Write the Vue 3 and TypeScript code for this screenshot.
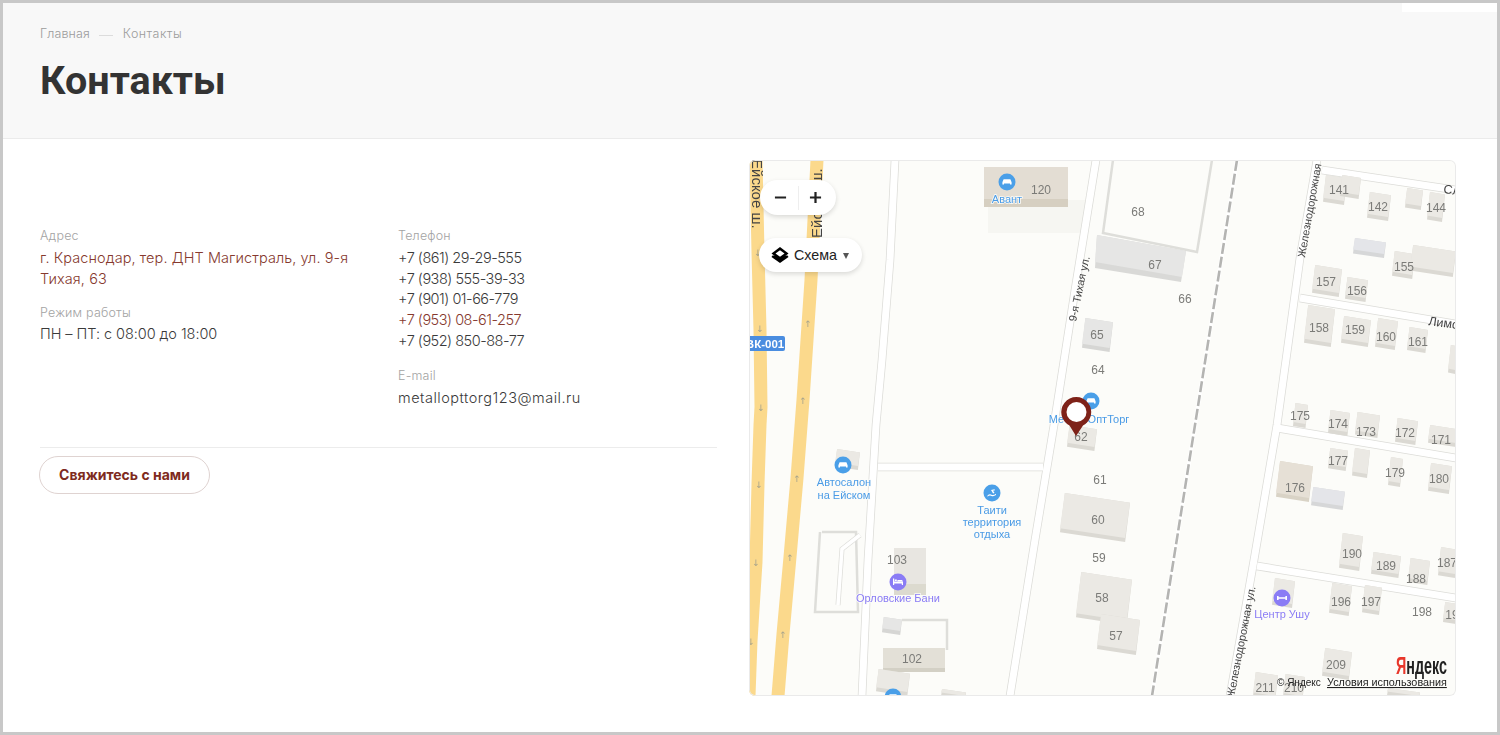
<script setup lang="ts">
interface Building { box: [number, number, number, number]; kind?: string }
interface Label { x: number; y: number; t: string }
interface Poi { x: number; y: number; color: string; glyph: string }

const phones = [
  { n: '+7 (861) 29-29-555' },
  { n: '+7 (938) 555-39-33' },
  { n: '+7 (901) 01-66-779' },
  { n: '+7 (953) 08-61-257', accent: true },
  { n: '+7 (952) 850-88-77' },
]

const buildings: Building[] = [
  { box: [1082, 318, 1113, 352], kind: 'cool' },
  { box: [1067, 425, 1097, 451] },
  { box: [1060, 493, 1130, 542] },
  { box: [1076, 572, 1132, 625] },
  { box: [1097, 614, 1140, 655] },
  { box: [835, 449, 860, 470] },
  { box: [882, 617, 902, 635], kind: 'cool' },
  { box: [876, 669, 910, 696] },
  { box: [941, 689, 966, 700] },
  { box: [1323, 175, 1347, 205] },
  { box: [1340, 175, 1361, 199] },
  { box: [1367, 192, 1391, 221] },
  { box: [1405, 188, 1423, 210] },
  { box: [1427, 192, 1445, 222] },
  { box: [1353, 238, 1386, 258], kind: 'blue' },
  { box: [1392, 251, 1415, 279] },
  { box: [1410, 245, 1456, 277] },
  { box: [1312, 265, 1342, 297] },
  { box: [1345, 277, 1368, 302] },
  { box: [1304, 305, 1335, 347] },
  { box: [1341, 316, 1371, 347] },
  { box: [1375, 318, 1398, 350] },
  { box: [1407, 327, 1428, 353] },
  { box: [1448, 345, 1458, 374] },
  { box: [1293, 403, 1308, 428] },
  { box: [1328, 410, 1350, 436] },
  { box: [1355, 412, 1380, 438] },
  { box: [1395, 418, 1418, 445] },
  { box: [1428, 425, 1458, 447] },
  { box: [1328, 448, 1348, 471] },
  { box: [1352, 448, 1370, 478] },
  { box: [1388, 457, 1403, 487] },
  { box: [1428, 463, 1452, 494] },
  { box: [1276, 461, 1313, 502], kind: 'tan' },
  { box: [1311, 487, 1345, 510], kind: 'blue' },
  { box: [1339, 533, 1363, 571] },
  { box: [1371, 552, 1401, 578] },
  { box: [1408, 558, 1430, 585] },
  { box: [1438, 547, 1458, 578] },
  { box: [1272, 578, 1295, 608] },
  { box: [1329, 583, 1352, 616] },
  { box: [1362, 585, 1382, 615] },
  { box: [1443, 602, 1458, 624] },
  { box: [1322, 648, 1352, 680] },
  { box: [1253, 672, 1278, 700] },
  { box: [1283, 674, 1305, 700] },
  { box: [1387, 688, 1420, 700] },
]

function top(b: Building): string {
  const [x1, y1, x2, y2] = b.box
  const d = (x2 - x1) * 0.14
  const s = (y2 - y1) * 0.1
  return `${x1 + s},${y1} ${x2},${y1 + d} ${x2 - s},${y2 - 4} ${x1},${y2 - d - 4}`
}
function base(b: Building): string {
  const [x1, y1, x2, y2] = b.box
  const d = (x2 - x1) * 0.14
  const s = (y2 - y1) * 0.1
  return `${x1 + s},${y1} ${x2},${y1 + d} ${x2 - s},${y2} ${x1},${y2 - d}`
}

const labels: Label[] = [
  { x: 1041, y: 194, t: '120' }, { x: 1138, y: 216, t: '68' }, { x: 1155, y: 269, t: '67' },
  { x: 1185, y: 303, t: '66' }, { x: 1097, y: 339, t: '65' }, { x: 1098, y: 374, t: '64' },
  { x: 1081, y: 441, t: '62' }, { x: 1100, y: 484, t: '61' }, { x: 1098, y: 524, t: '60' },
  { x: 1099, y: 562, t: '59' }, { x: 1102, y: 602, t: '58' }, { x: 1116, y: 640, t: '57' },
  { x: 897, y: 564, t: '103' }, { x: 912, y: 663, t: '102' }, { x: 1339, y: 194, t: '141' },
  { x: 1378, y: 211, t: '142' }, { x: 1436, y: 212, t: '144' }, { x: 1404, y: 271, t: '155' },
  { x: 1326, y: 286, t: '157' }, { x: 1357, y: 295, t: '156' }, { x: 1319, y: 332, t: '158' },
  { x: 1355, y: 334, t: '159' }, { x: 1386, y: 341, t: '160' }, { x: 1418, y: 346, t: '161' },
  { x: 1300, y: 420, t: '175' }, { x: 1338, y: 428, t: '174' }, { x: 1366, y: 436, t: '173' },
  { x: 1405, y: 437, t: '172' }, { x: 1441, y: 444, t: '171' }, { x: 1338, y: 465, t: '177' },
  { x: 1395, y: 477, t: '179' }, { x: 1439, y: 483, t: '180' }, { x: 1295, y: 492, t: '176' },
  { x: 1352, y: 558, t: '190' }, { x: 1386, y: 570, t: '189' }, { x: 1416, y: 583, t: '188' },
  { x: 1447, y: 567, t: '187' }, { x: 1341, y: 606, t: '196' }, { x: 1371, y: 606, t: '197' },
  { x: 1422, y: 616, t: '198' }, { x: 1452, y: 619, t: '19' }, { x: 1336, y: 669, t: '209' },
  { x: 1265, y: 692, t: '211' }, { x: 1294, y: 692, t: '210' },
]

const blueTexts: Label[] = [
  { x: 1007, y: 203, t: 'Авант' }, { x: 844, y: 486, t: 'Автосалон' }, { x: 844, y: 499, t: 'на Ейском' },
  { x: 992, y: 514, t: 'Таити' }, { x: 992, y: 526, t: 'территория' }, { x: 992, y: 538, t: 'отдыха' },
  { x: 1089, y: 423, t: 'МеталлОптТорг' },
]
const purpleTexts: Label[] = [
  { x: 898, y: 602, t: 'Орловские Бани' }, { x: 1282, y: 618, t: 'Центр Ушу' },
]

const carGlyph = 'M-4.6 2.6v-2.4l1.2-3h6.8l1.2 3v2.4h-1.6v-1h-6v1z'
const pois: Poi[] = [
  { x: 1007, y: 182, color: '#4a9fe8', glyph: carGlyph },
  { x: 843, y: 465, color: '#4a9fe8', glyph: carGlyph },
  { x: 893, y: 697, color: '#4a9fe8', glyph: carGlyph },
  { x: 1091, y: 401, color: '#4a9fe8', glyph: carGlyph },
  { x: 992, y: 493, color: '#4a9fe8', glyph: 'M-4.5 2.5q2-2 4-.8t4.5-1v1.4q-2.500 1.800-4.500 .8t-4 .8zM-1-3l3.500-.8.500 1-2 .6 1.500 2-1.400 .8z' },
  { x: 898, y: 582, color: '#8a7cf5', glyph: 'M-5-3.500h1.200v3h8.800v3.500h-1.200v-1.500h-7.600v1.500h-1.200zM-3.200-2.500h2v1.600h-2zM-.6-2h4.200q1 0 1 1v.2h-5.200z' },
  { x: 1282, y: 598, color: '#8a7cf5', glyph: 'M-5-2h1.600v1.300h6.800v-1.300h1.600v4h-1.600v-1.300h-6.800v1.300h-1.600z' },
]

const southArrows = [[758, 256], [760, 332], [761, 411], [759, 488], [756, 566], [751, 645]]
const northArrows = [[808, 327], [803, 404], [797, 482], [790, 561], [783, 638]]
</script>

<template>
  <div class="frame">
    <div class="corner-patch"></div>
    <header class="head">
      <nav class="crumbs">
        <span>Главная</span>
        <i class="crumb-sep"></i>
        <span class="crumb-current">Контакты</span>
      </nav>
      <h1 class="title">Контакты</h1>
    </header>

    <main class="body">
      <section class="info">
        <div class="columns">
          <div class="col">
            <div class="label">Адрес</div>
            <div class="value accent address">г. Краснодар, тер. ДНТ Магистраль, ул. 9-я Тихая, 63</div>
            <div class="label second">Режим работы</div>
            <div class="value hours">ПН – ПТ: с 08:00 до 18:00</div>
          </div>
          <div class="col">
            <div class="label">Телефон</div>
            <div v-for="p in phones" :key="p.n" class="value phone" :class="{ accent: p.accent }">{{ p.n }}</div>
            <div class="label third">E-mail</div>
            <div class="value email">metallopttorg123@mail.ru</div>
          </div>
        </div>
        <div class="rule"></div>
        <button class="cta" type="button">Свяжитесь с нами</button>
      </section>

      <section class="map">
        <svg class="map-svg" viewBox="749 160 707 536" width="707" height="536">
          <rect x="749" y="160" width="707" height="536" fill="#fcfcf9" />

          <!-- pale lot behind Avant -->
          <rect x="988" y="200" width="97" height="33" fill="#f6f6f2" />
          <rect x="984" y="167" width="84" height="40" fill="#e3ddd3" />
          <rect x="984" y="199" width="84" height="8" fill="#d6cfc1" />

          <!-- yellow highways -->
          <polyline class="yellow" points="756,160 758,252 760,330 761,407 760,425 758,484 756,562 751,641 749,696" />
          <polyline class="yellow" points="817,160 811,280 803,400 797,478 790,557 783,634 778,696" />

          <!-- thin lot outlines -->
          <g class="lot-line">
            <polyline points="822,532 856,532 858,612 815,612 820,532" />
            <polyline points="1113,160 1103,233 1197,252 1212,160" />
            <polyline points="902,620 947,620 947,650" />
          </g>

          <!-- white roads -->
          <g class="road-edge">
            <polyline points="895,160 890,260 882,360 876,425 868,560 862,696" />
            <polyline points="1096,160 1075,290 1054,425 1035,540 1010,696" />
            <polyline points="878,467 1043,467" />
            <polyline points="1317,160 1300,258 1277,425 1254,560 1230,696" />
            <polyline points="1322,170 1456,190" />
            <polyline points="1300,298 1456,324" />
            <polyline points="1277,428 1456,458" />
            <polyline points="1257,566 1456,598" />
          </g>
          <g class="road-fill">
            <polyline points="895,160 890,260 882,360 876,425 868,560 862,696" />
            <polyline points="1096,160 1075,290 1054,425 1035,540 1010,696" />
            <polyline points="878,467 1043,467" />
            <polyline points="1317,160 1300,258 1277,425 1254,560 1230,696" />
            <polyline points="1322,170 1456,190" />
            <polyline points="1300,298 1456,324" />
            <polyline points="1277,428 1456,458" />
            <polyline points="1257,566 1456,598" />
          </g>
          <polyline class="alley-edge" points="860,535 842,549 838,605" />
          <polyline class="alley-fill" points="860,535 842,549 838,605" />

          <!-- railway -->
          <polyline class="rail-base" points="1237,160 1195,425 1152,696" />
          <polyline class="rail-dash" points="1237,160 1195,425 1152,696" />

          <!-- large blocks -->
          <polygon points="1097,235 1186,251 1181,282 1095,268" fill="#d9d9d7" />
          <polygon points="1097,235 1186,251 1182,277 1095,262" fill="#e6e6e5" />
          <polygon points="894,548 926,548 926,595 894,595" fill="#e8e6e1" />
          <polygon points="894,584 926,584 926,595 894,595" fill="#dcdacf" />
          <polygon points="883,648 945,648 945,672 883,672" fill="#e3e0d7" />
          <polygon points="883,668 945,668 945,672 883,672" fill="#d3d0c5" />

          <g v-for="(b, i) in buildings" :key="i">
            <polygon :points="base(b)" :class="['shade', b.kind]" />
            <polygon :points="top(b)" :class="['roof', b.kind]" />
          </g>

          <!-- road arrows -->
          <text v-for="a in southArrows" :key="'s' + a[1]" :x="a[0]" :y="a[1]" class="arrow">↓</text>
          <text v-for="a in northArrows" :key="'n' + a[1]" :x="a[0]" :y="a[1]" class="arrow">↑</text>

          <!-- road signs -->
          <rect x="740" y="336" width="45" height="15" rx="2" fill="#4a8de0" />
          <text x="765" y="348" class="shield">ВК-001</text>

          <!-- street names -->
          <text class="street big" transform="translate(752 159) rotate(90)">Ейское ш.</text>
          <text class="street big" transform="translate(822 238) rotate(-90)">Ейское ш.</text>
          <text class="street" transform="translate(1076 322) rotate(-78)">9-я Тихая ул.</text>
          <text class="street" transform="translate(1305 258) rotate(-80)">Железнодорожная</text>
          <text class="street" transform="translate(1234 698) rotate(-79)">Железнодорожная ул.</text>
          <text class="street side" transform="translate(1443 193) rotate(8)">Сл</text>
          <text class="street side" transform="translate(1428 325) rotate(8)">Лимо</text>

          <!-- house numbers -->
          <text v-for="l in labels" :key="l.t" :x="l.x" :y="l.y" class="num">{{ l.t }}</text>

          <!-- POIs -->
          <g v-for="p in pois" :key="p.x" :transform="`translate(${p.x} ${p.y})`">
            <circle r="8.500" :fill="p.color" />
            <path :d="p.glyph" fill="#fff" />
          </g>
          <text v-for="l in blueTexts" :key="l.t" :x="l.x" :y="l.y" class="poi blue-t">{{ l.t }}</text>
          <text v-for="l in purpleTexts" :key="l.t" :x="l.x" :y="l.y" class="poi purple-t">{{ l.t }}</text>

          <!-- placemark -->
          <path d="M1076 436 L1069.500 425.500 A15 15 0 1 1 1083 425.500 Z" fill="#7e2219" />
          <circle cx="1076.500" cy="412" r="10" fill="#fff" />

          <!-- Yandex copyright -->
          <text x="1396" y="674" class="ya" textLength="51" lengthAdjust="spacingAndGlyphs"><tspan fill="#e8372b">Я</tspan>ндекс</text>
          <text x="1277" y="686" class="copy">© Яндекс</text>
          <text x="1327" y="686" class="copy under">Условия использования</text>
        </svg>

        <div class="ctl zoom">
          <button class="zoom-btn minus" type="button" aria-label="Уменьшить">
            <svg width="13" height="13" viewBox="0 0 14 14"><path d="M1 7h12" stroke="#222" stroke-width="2.400" /></svg>
          </button>
          <i class="zoom-div"></i>
          <button class="zoom-btn plus" type="button" aria-label="Увеличить">
            <svg width="13" height="13" viewBox="0 0 14 14"><path d="M1 7h12M7 1v12" stroke="#222" stroke-width="2.400" /></svg>
          </button>
        </div>
        <div class="ctl scheme">
          <svg width="18" height="18" viewBox="0 0 18 18">
            <path d="M9 9.500 L16.500 9.500 L17.500 11 L9 17 L.5 11 L1.500 9.500 Z" fill="#000" />
            <path d="M9 1 L17.500 7.500 L9 14 L.5 7.500 Z" fill="#000" />
            <path d="M9 4.200 L13.500 7.500 L9 10.800 L4.500 7.500 Z" fill="#fff" />
          </svg>
          <span class="scheme-t">Схема</span>
          <i class="tri"></i>
        </div>
        <div class="map-edge"></div>
      </section>
    </main>
  </div>
</template>

<style>
html, body { margin: 0; background: #fff; }
</style>

<style scoped>
.frame {
  position: relative;
  box-sizing: border-box;
  width: 1500px;
  height: 735px;
  border: 3px solid #c8c8c8;
  background: #fff;
  overflow: hidden;
  font-family: Inter, "Noto Sans", sans-serif;
}
.corner-patch {
  position: absolute;
  right: 0;
  top: 0;
  width: 95px;
  height: 9px;
  background: #fff;
}
.head {
  box-sizing: border-box;
  height: 136px;
  padding: 21px 37px 0;
  background: #f8f8f8;
  border-bottom: 1px solid #ebebeb;
}
.crumbs {
  display: flex;
  align-items: center;
  height: 18px;
  font-size: 12.500px;
  font-weight: 300;
  color: #9c9c9c;
  letter-spacing: 0.1px;
}
.crumb-current { letter-spacing: 0.45px; }
.crumb-sep {
  width: 14px;
  height: 1px;
  margin: 4px 10px 0 9px;
  background: #dcdcdc;
}
.title {
  margin: 15px 0 0;
  font-family: Roboto, sans-serif;
  font-size: 39.500px;
  line-height: 47px;
  font-weight: 700;
  color: #333;
}
.body {
  display: grid;
  grid-template-columns: 677px 707px;
  column-gap: 32px;
  padding: 21px 0 0 37px;
}
.info { padding-top: 68px; }
.columns {
  display: grid;
  grid-template-columns: 358px 319px;
  height: 219px;
}
.label {
  font-size: 12.500px;
  line-height: 16px;
  font-weight: 300;
  color: #a3a3a3;
  letter-spacing: 0.2px;
}
.value {
  margin-top: 4px;
  font-size: 14.500px;
  line-height: 20.700px;
  font-weight: 300;
  color: #3a3a3a;
  letter-spacing: 0;
}
.address {
  max-width: 320px;
  letter-spacing: 0.08px;
}
.phone { letter-spacing: -0.5px; }
.phone + .phone { margin-top: 0; }
.hours { letter-spacing: -0.06px; margin-top: 3px; }
.email { letter-spacing: 0.5px; margin-top: 4px; }
.accent { color: #86392e; }
.second { margin-top: 16px; }
.third { margin-top: 16px; }
.rule {
  height: 1px;
  background: #ececec;
}
.cta {
  display: block;
  box-sizing: border-box;
  width: 171px;
  height: 38px;
  margin: 8px 0 0 -1px;
  padding: 0 0 2px;
  border: 1px solid #dfd3d1;
  border-radius: 19px;
  background: #fff;
  color: #7e2a20;
  font-family: Inter, sans-serif;
  font-size: 14px;
  font-weight: 700;
}
.map {
  position: relative;
  width: 707px;
  height: 536px;
  border-radius: 6px;
  overflow: hidden;
}
.map-edge {
  position: absolute;
  inset: 0;
  border-radius: 6px;
  box-shadow: inset 0 0 0 1px #eaeaea;
  pointer-events: none;
}
.map-svg {
  display: block;
  filter: blur(0.3px);
}
.yellow {
  fill: none;
  stroke: #fbd98c;
  stroke-width: 13;
}
.lot-line polyline {
  fill: none;
  stroke: #dededa;
  stroke-width: 2.500;
}
.road-edge polyline {
  fill: none;
  stroke: #dcdcd8;
  stroke-width: 8.500;
}
.road-fill polyline {
  fill: none;
  stroke: #fff;
  stroke-width: 7;
}
.alley-edge {
  fill: none;
  stroke: #dededa;
  stroke-width: 5;
}
.alley-fill {
  fill: none;
  stroke: #fff;
  stroke-width: 3.500;
}
.rail-base {
  fill: none;
  stroke: #fff;
  stroke-width: 4;
}
.rail-dash {
  fill: none;
  stroke: #b4b4b2;
  stroke-width: 2.600;
  stroke-dasharray: 11 3;
}
.roof { fill: #ebe9e4; }
.shade { fill: #dbd9d3; }
.roof.cool { fill: #e6e6e5; }
.shade.cool { fill: #d6d6d4; }
.roof.blue { fill: #e4e5e9; }
.shade.blue { fill: #d6d7d8; }
.roof.tan { fill: #e6e0d6; }
.shade.tan { fill: #d9d3c6; }
.arrow {
  font-family: "DejaVu Sans", sans-serif;
  font-size: 9px;
  fill: #a8a48c;
  text-anchor: middle;
}
.shield {
  font-family: "Liberation Sans", sans-serif;
  font-size: 11.500px;
  font-weight: 700;
  fill: #fff;
  text-anchor: middle;
}
.street {
  font-family: "Liberation Sans", sans-serif;
  font-size: 11px;
  fill: #444;
}
.street.big { font-size: 15px; }
.street.side { font-size: 12.500px; }
.num {
  font-family: "Liberation Sans", sans-serif;
  font-size: 12px;
  fill: #7b7b78;
  text-anchor: middle;
}
.poi {
  font-family: "Liberation Sans", sans-serif;
  font-size: 11px;
  text-anchor: middle;
  stroke: #fcfcf9;
  stroke-width: 1.500px;
  paint-order: stroke;
}
.blue-t { fill: #4a9be6; }
.purple-t { fill: #8a7cf5; }
.ya {
  font-family: "Liberation Sans", sans-serif;
  font-size: 24px;
  font-weight: 700;
  fill: #222;
}
.copy {
  font-family: "Liberation Sans", sans-serif;
  font-size: 10px;
  fill: #222;
}
.under {
  font-size: 10.800px;
  text-decoration: underline;
}
.ctl {
  position: absolute;
  display: flex;
  align-items: center;
  background: #fff;
  box-shadow: 0 2px 5px rgba(0, 0, 0, 0.14);
}
.zoom {
  left: 11px;
  top: 20px;
  width: 76px;
  height: 35px;
  border-radius: 18px;
}
.zoom-btn {
  flex: 1;
  display: flex;
  align-items: center;
  justify-content: center;
  height: 100%;
  padding: 0;
  border: 0;
  background: none;
}
.minus { padding-left: 4px; }
.plus { padding-right: 4px; }
.zoom-div {
  width: 1px;
  height: 24px;
  background: #eee;
}
.scheme {
  left: 10px;
  top: 78px;
  box-sizing: border-box;
  width: 103px;
  height: 34px;
  padding-left: 12px;
  border-radius: 17px;
  font-family: "Liberation Sans", sans-serif;
}
.scheme-t {
  margin-left: 5px;
  font-size: 14.300px;
  color: #222;
}
.tri {
  width: 0;
  height: 0;
  margin: 2px 0 0 6px;
  border-left: 3.500px solid transparent;
  border-right: 3.500px solid transparent;
  border-top: 6px solid #555;
}
</style>
